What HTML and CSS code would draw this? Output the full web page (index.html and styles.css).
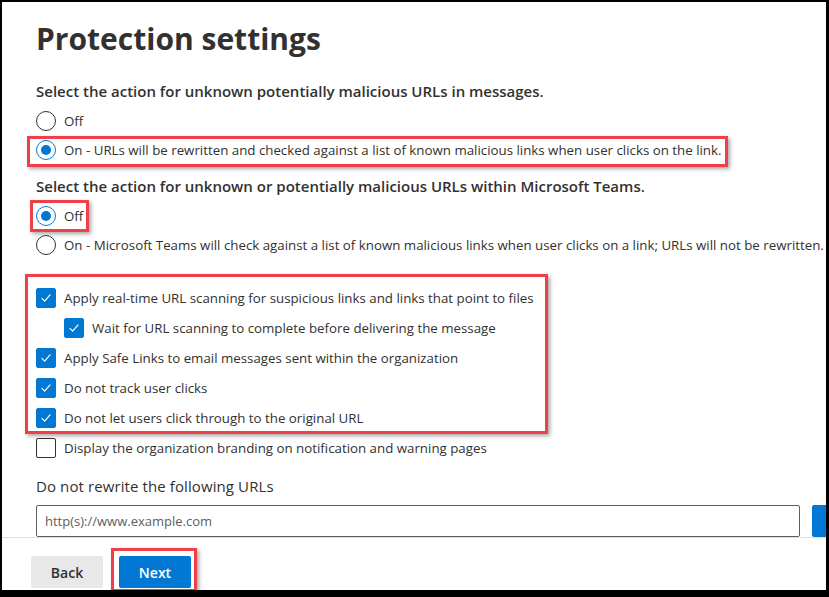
FILE: index.html
```html
<!DOCTYPE html>
<html>
<head>
<meta charset="utf-8">
<link rel="stylesheet" href="styles.css">
</head>
<body>
<div class="frame">
  <main class="content">
    <h1 class="title">Protection settings</h1>

    <div class="group-label first">Select the action for unknown potentially malicious URLs in messages.</div>
    <div class="row"><span class="radio"></span><span>Off</span></div>
    <div class="row fit mark mark-on"><span class="radio checked"></span><span>On - URLs will be rewritten and checked against a list of known malicious links when user clicks on the link.</span></div>

    <div class="group-label second">Select the action for unknown or potentially malicious URLs within Microsoft Teams.</div>
    <div class="row fit mark mark-off"><span class="radio checked"></span><span>Off</span></div>
    <div class="row"><span class="radio"></span><span>On - Microsoft Teams will check against a list of known malicious links when user clicks on a link; URLs will not be rewritten.</span></div>

    <div class="checks">
      <div class="check-group mark mark-checks">
        <div class="row"><span class="cb checked"><svg viewBox="0 0 20 20"><path d="M5.5 10.5l3 3 6-7" /></svg></span><span>Apply real-time URL scanning for suspicious links and links that point to files</span></div>
        <div class="row indent"><span class="cb checked"><svg viewBox="0 0 20 20"><path d="M5.5 10.5l3 3 6-7" /></svg></span><span>Wait for URL scanning to complete before delivering the message</span></div>
        <div class="row"><span class="cb checked"><svg viewBox="0 0 20 20"><path d="M5.5 10.5l3 3 6-7" /></svg></span><span>Apply Safe Links to email messages sent within the organization</span></div>
        <div class="row"><span class="cb checked"><svg viewBox="0 0 20 20"><path d="M5.5 10.5l3 3 6-7" /></svg></span><span>Do not track user clicks</span></div>
        <div class="row"><span class="cb checked"><svg viewBox="0 0 20 20"><path d="M5.5 10.5l3 3 6-7" /></svg></span><span>Do not let users click through to the original URL</span></div>
      </div>
      <div class="row"><span class="cb"></span><span>Display the organization branding on notification and warning pages</span></div>
    </div>

    <div class="field-label">Do not rewrite the following URLs</div>
    <div class="field-row">
      <div class="input">http(s)://www.example.com</div>
      <div class="add-btn"></div>
    </div>
  </main>
  <footer class="footer">
    <button class="btn btn-back">Back</button>
    <button class="btn btn-next mark mark-next">Next</button>
  </footer>
</div>
</body>
</html>
```

FILE: styles.css
```css
* { box-sizing: border-box; }
html, body { margin: 0; padding: 0; background: #000; }
body {
  width: 829px;
  height: 597px;
  font-family: "Open Sans", "Noto Sans", sans-serif;
  color: #323130;
}
.frame {
  width: 829px;
  height: 597px;
  border-style: solid;
  border-color: #000;
  border-width: 2px 3px 7px 2px;
  background: #fff;
  display: flex;
  flex-direction: column;
  overflow: hidden;
}
.content {
  height: 535px;
  overflow: hidden;
  padding-left: 34px;
  display: flex;
  flex-direction: column;
  align-items: flex-start;
  flex: none;
}
.title {
  margin: 17px 0 0 0;
  font-size: 30px;
  line-height: 40px;
  font-weight: 700;
  color: #323130;
  letter-spacing: 0;
}
.group-label {
  height: 29px;
  display: flex;
  align-items: center;
  font-size: 15px;
  font-weight: 600;
  color: #323130;
  white-space: nowrap;
}
.group-label.first { margin-top: 18px; }
.group-label.second { margin-top: 7px; }
.row {
  height: 30px;
  display: flex;
  align-items: center;
  gap: 8px;
  font-size: 13.3px;
  white-space: nowrap;
  color: #323130;
}
.fit { align-self: flex-start; }
.radio {
  width: 20px;
  height: 20px;
  border: 1px solid #323130;
  border-radius: 50%;
  flex: none;
  position: relative;
  background: #fff;
}
.radio.checked { border-color: #0078d4; }
.radio.checked::after {
  content: "";
  position: absolute;
  left: 4px; top: 4px;
  width: 10px; height: 10px;
  border-radius: 50%;
  background: #0078d4;
}
.checks {
  margin-top: 23px;
  display: flex;
  flex-direction: column;
  align-items: flex-start;
}
.check-group {
  display: flex;
  flex-direction: column;
}
.indent { padding-left: 28px; }
.cb {
  width: 20px;
  height: 20px;
  border: 1px solid #323130;
  border-radius: 2px;
  flex: none;
  display: flex;
  align-items: center;
  justify-content: center;
}
.cb.checked { background: #0078d4; border-color: #0078d4; }
.cb svg { width: 20px; height: 20px; }
.cb svg path { fill: none; stroke: #fff; stroke-width: 1.3; stroke-linecap: round; stroke-linejoin: round; }
.field-label {
  margin-top: 10px;
  height: 26px;
  display: flex;
  align-items: center;
  font-size: 15px;
  letter-spacing: 0.1px;
  color: #323130;
}
.field-row {
  margin-top: 6px;
  display: flex;
  gap: 12px;
  flex: none;
}
.input {
  width: 764px;
  height: 32px;
  border: 1px solid #605e5c;
  border-radius: 2px;
  padding-left: 8px;
  display: flex;
  align-items: center;
  font-size: 13px;
  color: #605e5c;
}
.add-btn {
  width: 60px;
  height: 32px;
  background: #0078d4;
  border-radius: 2px;
  flex: none;
}
.footer {
  flex: 1;
  border-top: 1px solid #e1dfdd;
  display: flex;
  align-items: flex-start;
  padding: 18px 0 0 29px;
  gap: 16px;
}
.btn {
  width: 72px;
  height: 32px;
  border: none;
  border-radius: 2px;
  font-family: "Open Sans", "Noto Sans", sans-serif;
  font-size: 14px;
  font-weight: 600;
  padding: 0;
}
.btn-back { background: #e8e8e8; color: #323130; }
.btn-next { background: #0078d4; color: #fff; }

/* red annotation boxes overlaying content */
.mark { position: relative; }
.mark::after {
  content: "";
  position: absolute;
  border: 3px solid #ef3f48;
  box-shadow: 2px 2px 4px rgba(0, 0, 0, 0.35);
  pointer-events: none;
}
.mark-on::after { left: -9px; right: -6px; top: 1px; bottom: -2px; }
.mark-off::after { left: -6px; right: -6px; top: -1px; bottom: -1px; }
.mark-checks::after { left: -11px; right: -14px; top: -9px; bottom: -1px; }
.mark-next::after { left: -8px; right: -6px; top: -8px; bottom: -4px; }
```
